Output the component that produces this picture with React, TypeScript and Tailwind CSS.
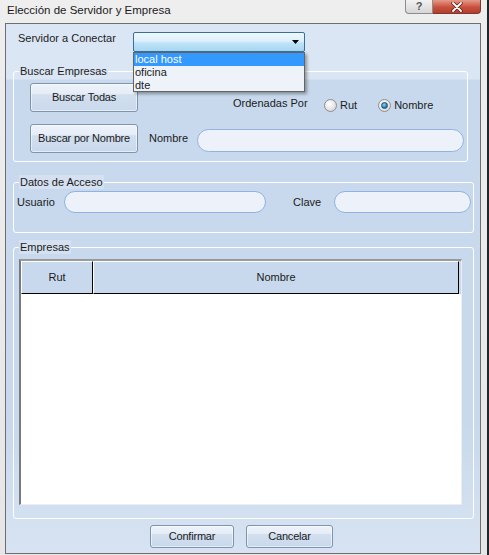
import React from 'react';

const btn =
  'flex items-center justify-center rounded-[3px] border border-[#7f93ad] bg-[linear-gradient(to_bottom,#eef3fa_0%,#e6edf7_35%,#d2dfef_40%,#c9d8ec_100%)] shadow-[inset_0_0_0_1px_rgba(255,255,255,0.55)] text-[11px] tracking-[-0.2px] text-[#1b1b1b]';

const pill = 'rounded-full border border-[#8fb3e2] bg-[#edf2fa]';

const Radio: React.FC<{ checked?: boolean; label: string }> = ({ checked, label }) => (
  <div className="flex items-center">
    <span className="flex h-[13px] w-[13px] items-center justify-center rounded-full border border-[#8e8f8f] bg-[radial-gradient(circle_at_40%_35%,#ffffff_0%,#e6e6e6_55%,#c9c9c9_100%)]">
      {checked && (
        <span className="h-[7px] w-[7px] rounded-full border border-[#1d4f6f] bg-[radial-gradient(circle_at_40%_35%,#8fd3f7_0%,#2e8ac2_55%,#0c4a74_100%)]" />
      )}
    </span>
    <span className="ml-[3px] text-[11px]">{label}</span>
  </div>
);

const App: React.FC = () => {
  return (
    <div className="relative h-[555px] w-[489px] overflow-hidden bg-[#20262b] font-['Liberation_Sans',Arial,sans-serif] text-[#1b1b1b]">
      {/* window frame */}
      <div className="h-[555px] w-[487px] bg-[linear-gradient(to_bottom,#eeeeee,#e6e6e6)]">
        {/* title bar */}
        <div className="flex h-[23px] items-start">
          <span className="ml-[7px] mt-[3px] text-[11.5px] leading-[14px] text-[#1a1a1a]">Elección de Servidor y Empresa</span>
          <div className="ml-auto mr-[6px] flex">
            <div className="flex h-[14px] w-[28px] items-center justify-center rounded-bl-[4px] border border-t-0 border-[#8d8d8d] bg-[linear-gradient(to_bottom,#f2f2f2,#d6d6d6)] text-[11px] font-bold leading-none text-[#555]">
              ?
            </div>
            <div className="flex h-[14px] w-[48px] items-center justify-center rounded-br-[4px] border border-l-0 border-t-0 border-[#7a3a32] bg-[linear-gradient(to_bottom,#e69a8a,#c9513c_55%,#b33e2c)]">
              <svg width="12" height="10" viewBox="0 0 12 10">
                <path d="M2 1 L10 9 M10 1 L2 9" stroke="#5a2018" strokeWidth="3.4" strokeLinecap="round" />
                <path d="M2 1 L10 9 M10 1 L2 9" stroke="#ffffff" strokeWidth="1.8" strokeLinecap="round" />
              </svg>
            </div>
          </div>
        </div>

        {/* client panel */}
        <div className="ml-[5px] h-[531px] w-[476px] border border-[#6e6e6e] bg-[linear-gradient(to_bottom,#dbe6f4_0px,#dbe6f4_55px,#c8d9ed_56px,#c8d9ed_400px,#d7e3f2_530px)]">
          {/* server row */}
          <div className="flex items-start pt-[8px]">
            <span className="ml-[12px] mt-[-1px] w-[115px] text-[11px] leading-[14px]">Servidor a Conectar</span>
            <div className="relative h-[20px] w-[172px] rounded-[2px] border border-[#3b6f93] bg-[linear-gradient(to_bottom,#eef8fd_0%,#dcf0fc_45%,#bfe3f8_55%,#a6d6f3_100%)]">
              <svg className="absolute right-[4px] top-[7px]" width="8" height="4" viewBox="0 0 8 4">
                <path d="M0 0 H7 L3.5 4 Z" fill="#000" />
              </svg>
            </div>
          </div>

          {/* Buscar Empresas */}
          <div className="relative ml-[7px] mt-[19px] h-[91px] w-[455px] rounded-[3px] border border-white bg-[linear-gradient(to_bottom,#dbe6f4_0px,#dbe6f4_7px,#c8d9ed_8px,#c8d9ed_100%)]">
            <span className="absolute left-[5px] top-[-8px] bg-[#dbe6f4] px-[1px] text-[11px] leading-[14px]">Buscar Empresas</span>
            <div className="ml-[16px] mt-[11px] flex items-start">
              <div className={`${btn} h-[29px] w-[108px]`}>Buscar Todas</div>
              <span className="ml-[95px] mt-[13px] w-[91px] text-[11px] leading-[14px]">Ordenadas Por</span>
              <div className="mt-[14px] flex">
                <Radio label="Rut" />
                <div className="ml-[21px]">
                  <Radio checked label="Nombre" />
                </div>
              </div>
            </div>
            <div className="ml-[16px] mt-[10px] flex items-start">
              <div className={`${btn} h-[29px] w-[108px]`}>Buscar por Nombre</div>
              <span className="ml-[11px] mt-[7px] w-[48px] text-[11px] leading-[14px]">Nombre</span>
              <div className={`${pill} mt-[5px] h-[23px] w-[267px]`} />
            </div>
          </div>

          {/* Datos de Acceso */}
          <div className="relative ml-[7px] mt-[20px] h-[51px] w-[461px] rounded-[3px] border border-white">
            <span className="absolute left-[5px] top-[-8px] bg-[#d5e1f1] px-[1px] text-[11px] leading-[14px]">Datos de Acceso</span>
            <div className="mt-[8px] flex items-center">
              <span className="ml-[3px] w-[47px] text-[11px]">Usuario</span>
              <div className={`${pill} h-[22px] w-[202px]`} />
              <span className="ml-[27px] w-[41px] text-[11px]">Clave</span>
              <div className={`${pill} h-[22px] w-[137px]`} />
            </div>
          </div>

          {/* Empresas */}
          <div className="relative ml-[7px] mt-[14px] h-[272px] w-[461px] rounded-[3px] border border-white">
            <span className="absolute left-[5px] top-[-8px] bg-[#d5e1f1] px-[1px] text-[11px] leading-[14px]">Empresas</span>
            <div className="ml-[5px] mt-[11px] h-[246px] w-[443px] border-l-2 border-t-2 border-b border-r border-l-[#7a7a7a] border-t-[#9a9a9a] border-b-[#eeeeee] border-r-[#eeeeee] bg-white">
              <div className="flex h-[33px] bg-[#c8d9ed]">
                <div className="flex w-[72px] items-center justify-center border-b border-r border-l border-t border-b-black border-r-black border-l-white border-t-white text-[11px]">
                  Rut
                </div>
                <div className="flex w-[366px] items-center justify-center border-b border-r border-l border-t border-b-black border-r-black border-l-white border-t-white text-[11px]">
                  Nombre
                </div>
              </div>
            </div>
          </div>

          {/* bottom buttons */}
          <div className="ml-[144px] mt-[6px] flex gap-[12px]">
            <div className={`${btn} h-[23px] w-[84px]`}>Confirmar</div>
            <div className={`${btn} h-[23px] w-[87px]`}>Cancelar</div>
          </div>
        </div>
      </div>

      {/* open combo list */}
      <div className="absolute left-[133px] top-[52px] h-[40px] w-[172px] border border-[#646464] bg-[#eef2f9] text-[11px] leading-[13px] shadow-[2px_2px_3px_rgba(0,0,0,0.35)]">
        <div className="bg-[#3399ff] pl-[1px] text-white">local host</div>
        <div className="pl-[1px]">oficina</div>
        <div className="pl-[1px]">dte</div>
      </div>
    </div>
  );
};

export default App;
